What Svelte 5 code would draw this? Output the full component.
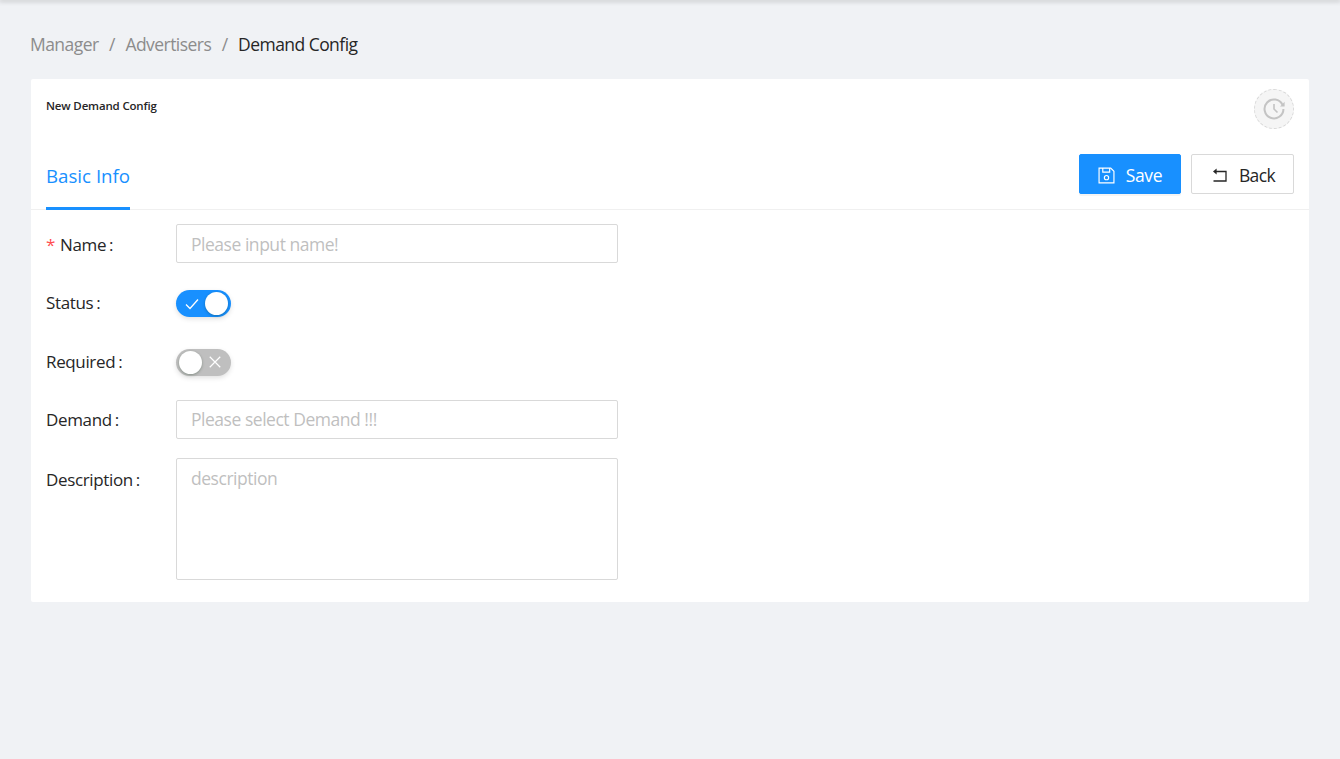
<script>
  let status = true;
  let required = false;
</script>

<div class="topbar"></div>
<main class="page">
  <nav class="breadcrumb">
    <span>Manager</span><i>/</i><span>Advertisers</span><i>/</i><span class="current">Demand Config</span>
  </nav>

  <section class="card">
    <div class="card-head">
      <h1>New Demand Config</h1>
      <button class="history" aria-label="history">
        <svg viewBox="0 0 24 24" width="22" height="22" fill="none" stroke="#c4c4c4" stroke-width="2.2">
          <path d="M21.3 7.5A10.3 10.3 0 1 0 22.3 12" />
          <path d="M12 6.5V12l3.8 3.8" stroke-width="1.8" />
          <path d="M18.6 9.2h5V4.2z" fill="#c4c4c4" stroke="none" />
        </svg>
      </button>
    </div>

    <div class="tabs">
      <div class="tab">Basic Info</div>
      <div class="actions">
        <button class="btn primary">
          <svg viewBox="0 0 16 16" width="17" height="17" fill="none" stroke="currentColor" stroke-width="1.1">
            <path d="M1 1h11l3 3v11H1z" />
            <path d="M4.5 1v3.8h6.5V1" />
            <circle cx="8" cy="10" r="2" />
          </svg>
          Save
        </button>
        <button class="btn back">
          <svg viewBox="0 0 16 16" width="16" height="16" fill="none" stroke="#262626" stroke-width="1.3">
            <path d="M3 4.5h11v9.5H1.5" />
            <path d="M4.6 1.5v6L1 4.5z" fill="#262626" stroke="none" />
          </svg>
          Back
        </button>
      </div>
    </div>

    <form class="form">
      <div class="row">
        <label for="name"><em>*</em>Name<b>:</b></label>
        <input id="name" placeholder="Please input name!" />
      </div>
      <div class="row">
        <label for="status">Status<b>:</b></label>
        <button id="status" type="button" class="switch on" aria-pressed={status}>
          <svg class="mark" viewBox="0 0 16 16" width="16" height="16" fill="none" stroke="#fff" stroke-width="1.3">
            <path d="M2 8.5l4 4 8-9" />
          </svg>
          <span class="knob"></span>
        </button>
      </div>
      <div class="row">
        <label for="required">Required<b>:</b></label>
        <button id="required" type="button" class="switch" aria-pressed={required}>
          <span class="knob"></span>
          <svg class="mark" viewBox="0 0 16 16" width="14" height="14" fill="none" stroke="#fff" stroke-width="1.4">
            <path d="M2 2l12 12M14 2L2 14" />
          </svg>
        </button>
      </div>
      <div class="row">
        <label for="demand">Demand<b>:</b></label>
        <input id="demand" placeholder="Please select Demand !!!" />
      </div>
      <div class="row">
        <label for="description">Description<b>:</b></label>
        <textarea id="description" placeholder="description"></textarea>
      </div>
    </form>
  </section>
</main>

<style>
  :global(body) {
    background: #f0f2f5;
    font-family: "Open Sans", "Noto Sans", sans-serif;
    color: #262626;
  }

  .topbar {
    height: 0;
    box-shadow: 0 0 5px 1px rgba(0, 0, 0, 0.3);
  }

  .page {
    padding: 31px 31px 0;
    height: 728px;
  }

  .breadcrumb {
    display: flex;
    gap: 10.5px;
    height: 26px;
    margin-left: -1px;
    align-items: center;
    font-size: 17.5px;
    letter-spacing: -0.55px;
    color: #8c8c8c;
  }

  .breadcrumb i {
    font-style: normal;
  }

  .current {
    color: #262626;
  }

  .card {
    margin-top: 22px;
    width: 1278px;
    height: 523px;
    background: #fff;
    border-radius: 2px;
    box-sizing: border-box;
  }

  .card-head {
    display: flex;
    justify-content: space-between;
    padding: 10px 15px 0;
    height: 65px;
    box-sizing: border-box;
  }

  h1 {
    margin: 9px 0 0;
    font-size: 11.5px;
    line-height: 15px;
    font-weight: 600;
    letter-spacing: -0.16px;
    color: #262626;
  }

  .history {
    width: 40px;
    height: 40px;
    padding: 0;
    border: 1px dashed #d9d9d9;
    border-radius: 50%;
    background: #f5f5f5;
    display: flex;
    align-items: center;
    justify-content: center;
  }

  .tabs {
    display: flex;
    justify-content: space-between;
    padding: 0 15px;
    height: 66px;
    box-sizing: border-box;
    border-bottom: 1px solid #f0f0f0;
  }

  .tab {
    height: 66px;
    box-sizing: border-box;
    padding-top: 19px;
    line-height: 26px;
    font-size: 18.7px;
    color: #1890ff;
    border-bottom: 3px solid #1890ff;
  }

  .actions {
    display: flex;
    gap: 10px;
    padding-top: 10px;
  }

  .btn {
    height: 40px;
    display: flex;
    align-items: center;
    justify-content: center;
    gap: 11px;
    width: 103px;
    padding: 2px 0 0;
    border: 1px solid #d9d9d9;
    border-radius: 2px;
    background: #fff;
    color: #262626;
    font: inherit;
    font-size: 17.5px;
    letter-spacing: -0.35px;
  }

  .btn.back {
    padding-left: 2px;
    letter-spacing: -0.6px;
  }

  .btn.primary {
    width: 102px;
    background: #1890ff;
    border-color: #1890ff;
    color: #fff;
    box-shadow: 0 2px 0 rgba(0, 0, 0, 0.045);
  }

  .form {
    padding: 14px 15px 0;
    display: flex;
    flex-direction: column;
    gap: 20px;
  }

  .row {
    display: flex;
    align-items: center;
    height: 38.5px;
  }

  .row:last-child {
    align-items: flex-start;
    height: auto;
  }

  label {
    width: 130px;
    flex: none;
    padding-top: 3px;
    font-size: 17px;
    letter-spacing: -0.36px;
    line-height: 36px;
    color: #262626;
  }

  .row:last-child label {
    padding-top: 4px;
  }

  label b {
    font-weight: 400;
    margin-left: 3px;
  }

  label em {
    font-style: normal;
    color: #ff4d4f;
    margin-right: 5px;
  }

  input,
  textarea {
    width: 442px;
    box-sizing: border-box;
    border: 1px solid #d9d9d9;
    border-radius: 2px;
    padding: 0 14px;
    background: #fff;
    font: inherit;
    font-size: 17.5px;
    letter-spacing: -0.47px;
    color: #262626;
    outline: none;
  }

  input {
    height: 39px;
    align-self: flex-start;
  }

  textarea {
    display: block;
    height: 122px;
    padding: 6px 14px;
    line-height: 27px;
    resize: none;
  }

  ::placeholder {
    color: #bfbfbf;
    opacity: 1;
  }

  .switch {
    position: relative;
    top: 2px;
    width: 55px;
    height: 27px;
    padding: 0 3px;
    border: 0;
    border-radius: 14px;
    background: #bfbfbf;
    display: flex;
    align-items: center;
    justify-content: space-between;
    box-shadow: 0 2px 5px rgba(0, 0, 0, 0.12);
  }

  .switch .mark {
    margin-right: 6px;
  }

  .switch.on {
    background: #1890ff;
  }

  .switch.on .mark {
    margin: 0 0 0 5px;
  }

  .knob {
    width: 23px;
    height: 23px;
    border-radius: 50%;
    background: #fff;
    box-shadow: 0 1px 3px rgba(0, 35, 11, 0.3);
  }
</style>
